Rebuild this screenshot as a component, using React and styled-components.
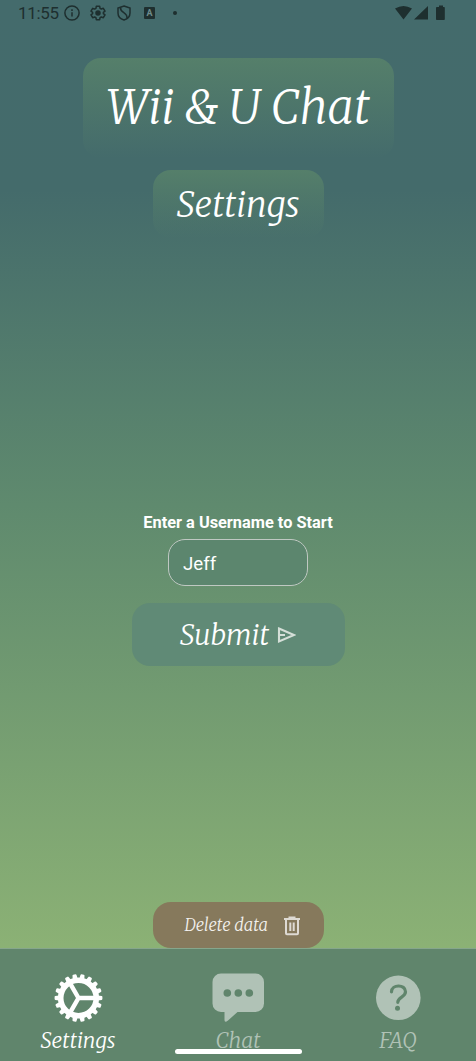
import React from 'react';
import styled, { createGlobalStyle } from 'styled-components';

const GlobalStyle = createGlobalStyle`
  *, *::before, *::after { box-sizing: border-box; }
  body { margin: 0; font-family: Roboto, sans-serif; color: #fff; overflow: hidden; }
`;

const Screen = styled.div`
  position: relative;
  display: flex;
  flex-direction: column;
  height: 1061px;
  background: linear-gradient(#446b6c 0, #446b6b 190px, #5f8a6e 505px, #8cb275 955px);
`;

const StatusBar = styled.header`
  display: flex;
  align-items: center;
  height: 26px;
  padding: 0 30px 0 18px;
  color: #1e2f2f;
`;

const Clock = styled.span`
  width: 46px;
  font-size: 17px;
  letter-spacing: -0.3px;
`;

const StatusIcons = styled.div`
  display: flex;
  align-items: center;
  gap: 10px;
  flex: 1;
`;

const SignalIcons = styled.div`
  display: flex;
  align-items: center;
  height: 16px;
`;

const Content = styled.main`
  display: flex;
  flex: 1;
  flex-direction: column;
  align-items: center;
  padding-top: 32px;
`;

const Script = styled.span`
  display: block;
  flex: none;
  margin: 0;
  font-family: Merriweather, 'Liberation Serif', serif;
  font-style: italic;
  font-weight: 300;
  font-size: ${(p) => p.$size}px;
  line-height: 1;
  white-space: nowrap;
`;

const Plate = styled.div`
  display: flex;
  justify-content: center;
  width: ${(p) => p.$width}px;
  height: ${(p) => p.$height}px;
  margin-bottom: 12px;
  padding-top: ${(p) => p.$top}px;
  border-radius: 18px;
  background: linear-gradient(#557f6a, rgba(68, 107, 107, 0));
`;

const Form = styled.form`
  display: flex;
  flex-direction: column;
  align-items: center;
  margin-top: 263px;
`;

const Label = styled.label`
  font-size: 16.35px;
  font-weight: 700;
  line-height: 20px;
  white-space: nowrap;
`;

const Input = styled.input`
  width: 140px;
  height: 47px;
  margin: 6px 0 17px;
  padding: 2px 14px 0;
  border: 1px solid #bfc8c2;
  border-radius: 17px;
  outline: 0;
  background: #5c866e;
  color: #fff;
  font: 18.7px Roboto, sans-serif;
`;

const SubmitButton = styled.button`
  display: flex;
  align-items: center;
  justify-content: center;
  gap: 8px;
  width: 213px;
  height: 63px;
  margin-left: 1px;
  padding: 1px 1px 0 0;
  border: 0;
  border-radius: 18px;
  background: #608a76;
  color: #fff;
`;

const DeleteButton = styled.button`
  display: flex;
  align-items: center;
  justify-content: space-between;
  width: 171px;
  height: 46px;
  margin-top: auto;
  padding: 2px 22px 0 32px;
  border: 0;
  border-radius: 18px;
  background: #86795c;
  color: #f2f0ec;
`;

const TabBar = styled.nav`
  display: grid;
  grid-template-columns: 156px 164px 156px;
  height: 113px;
  border-top: 1px solid #86a68c;
  background: #60856c;
`;

const Tab = styled.a`
  display: flex;
  flex-direction: column;
  align-items: center;
  gap: 7px;
  padding-top: 24px;
  color: ${(p) => (p.$active ? '#fff' : '#b0c2b6')};
`;

const HomeIndicator = styled.div`
  position: absolute;
  left: 175px;
  bottom: 7px;
  width: 127px;
  height: 5px;
  border-radius: 3px;
  background: #fff;
`;

const InfoIcon = () => (
  <svg width="16" height="16" viewBox="0 0 16 16" fill="none" stroke="currentColor" strokeWidth="1.5">
    <circle cx="8" cy="8" r="7.1" /><path d="M8 7.2v4.3M8 4.3v1.6" />
  </svg>
);
const SmallGearIcon = () => (
  <svg width="16" height="16" viewBox="0 0 24 24" fill="none" stroke="currentColor" strokeWidth="2.3" strokeLinejoin="round">
    <path d="m9.5 2-.6 3-1.9 1.1-3-1-2.5 4.2L3.9 11v2l-2.4 1.800L4 19l3-1 1.900 1 .6 3h5l.6-3 1.900-1 3 1 2.500-4.200-2.400-1.800v-2l2.400-1.800L20 5l-3 1-1.900-1-.6-3Z" />
    <circle cx="12" cy="12" r="3" fill="currentColor" />
  </svg>
);
const ShieldIcon = () => (
  <svg width="16" height="16" viewBox="0 0 16 16" fill="none" stroke="currentColor" strokeWidth="1.5">
    <path d="M8 1 14 3v5c0 3.500-2.500 6-6 7-3.500-1-6-3.500-6-7V3ZM4.500 2.500c-.5 6 7.500 4.500 6.500 11" />
  </svg>
);
const LetterBadge = styled.span`
  display: flex;
  align-items: center;
  justify-content: center;
  width: 11px;
  height: 12px;
  margin: 0 8px 0 2px;
  border-radius: 1px;
  background: #1e2f2f;
  color: #6e8c8b;
  font-size: 9px;
  font-weight: 700;
`;
const Dot = styled.span`
  width: 4px;
  height: 4px;
  border-radius: 50%;
  background: currentColor;
`;
const SignalIcon = () => (
  <svg width="52" height="16" viewBox="0 0 52 16" fill="currentColor">
    <path d="M1 3.600Q9.500-1.800 18 3.600L9.500 14.500ZM20 14.500 34 1v13.500ZM43 2h2V.5h4V2h1q.8 0 .8.8v11.400q0 .8-.8.8h-7.200q-.8 0-.8-.8V2.800Q42 2 43 2Z" />
  </svg>
);
const SendIcon = () => (
  <svg width="19" height="18" viewBox="0 0 19 18" fill="none" stroke="#d5dfd8" strokeWidth="2.100">
    <path d="M2 2.500 17 9l-15 6.500ZM2 9h6" />
  </svg>
);
const TrashIcon = () => (
  <svg width="20" height="22" viewBox="0 0 20 22" fill="none" stroke="#dedad3" strokeWidth="2">
    <path d="M2 4h16M6.500 2.600h7M4 4v14.300q0 .9.900.9h10.200q.9 0 .9-.9V4M8.300 7.500v8.500M11.700 7.500v8.500" />
  </svg>
);

const teeth = Array.from({ length: 18 }, (_, i) => i * 20 + 10);
const CogIcon = () => (
  <svg width="50" height="50" viewBox="-25.500 -25 50 50" fill="none" stroke="currentColor">
    <circle r="17.800" strokeWidth="5.600" />
    {teeth.map((a) => (
      <path key={a} d="M-2.500-19.500-2-23.200q.2-.7.900-.7H1.100q.7 0 .9.700L2.500-19.500Z" fill="currentColor" stroke="none" transform={`rotate(${a})`} />
    ))}
    <path d="M0 0H18M0 0-9-15.600M0 0-9 15.600" strokeWidth="4.500" />
  </svg>
);
const ChatIcon = () => (
  <svg width="54" height="50" viewBox="0 0 54 50">
    <path fill="currentColor" d="M10 .5h34.500a8.500 8.500 0 0 1 8.500 8.500v21.500a8.500 8.500 0 0 1-8.500 8.500H26.500l-9.500 8.500q-3.500 2.600-3.500-.5V39H10a8.500 8.500 0 0 1-8.500-8.500V9a8.500 8.500 0 0 1 8.500-8.500Z" />
    <g fill="#60856c"><circle cx="16.300" cy="20" r="3.800" /><circle cx="27.300" cy="20" r="3.800" /><circle cx="38.300" cy="20" r="3.800" /></g>
  </svg>
);
const HelpIcon = () => (
  <svg width="50" height="50" viewBox="0 0 50 50">
    <circle cx="25.300" cy="24.800" r="22.300" fill="currentColor" />
    <path d="M18.500 18.800c0-7.500 14-8 14 0 0 5.500-7.700 5-7.700 10.500" fill="none" stroke="#60856c" strokeWidth="3.200" strokeLinecap="round" />
    <circle cx="24.500" cy="35.300" r="2.500" fill="#60856c" />
  </svg>
);

export default function App() {
  return (
    <Screen>
      <GlobalStyle />
      <StatusBar>
        <Clock>11:55</Clock>
        <StatusIcons>
          <InfoIcon /><SmallGearIcon /><ShieldIcon /><LetterBadge>A</LetterBadge><Dot />
        </StatusIcons>
        <SignalIcons><SignalIcon /></SignalIcons>
      </StatusBar>
      <Content>
        <Plate $width={311} $height={100} $top={27}><Script as="h1" $size={46.6}>Wii &amp; U Chat</Script></Plate>
        <Plate $width={171} $height={68} $top={18}><Script as="h2" $size={34.8}>Settings</Script></Plate>
        <Form onSubmit={(e) => e.preventDefault()}>
          <Label htmlFor="username">Enter a Username to Start</Label>
          <Input id="username" defaultValue="Jeff" />
          <SubmitButton><Script $size={28.2}>Submit</Script><SendIcon /></SubmitButton>
        </Form>
        <DeleteButton><Script $size={16.6}>Delete data</Script><TrashIcon /></DeleteButton>
      </Content>
      <TabBar>
        <Tab $active><CogIcon /><Script $size={21.2}>Settings</Script></Tab>
        <Tab><ChatIcon /><Script $size={21.2}>Chat</Script></Tab>
        <Tab><HelpIcon /><Script $size={21.2}>FAQ</Script></Tab>
      </TabBar>
      <HomeIndicator />
    </Screen>
  );
}
